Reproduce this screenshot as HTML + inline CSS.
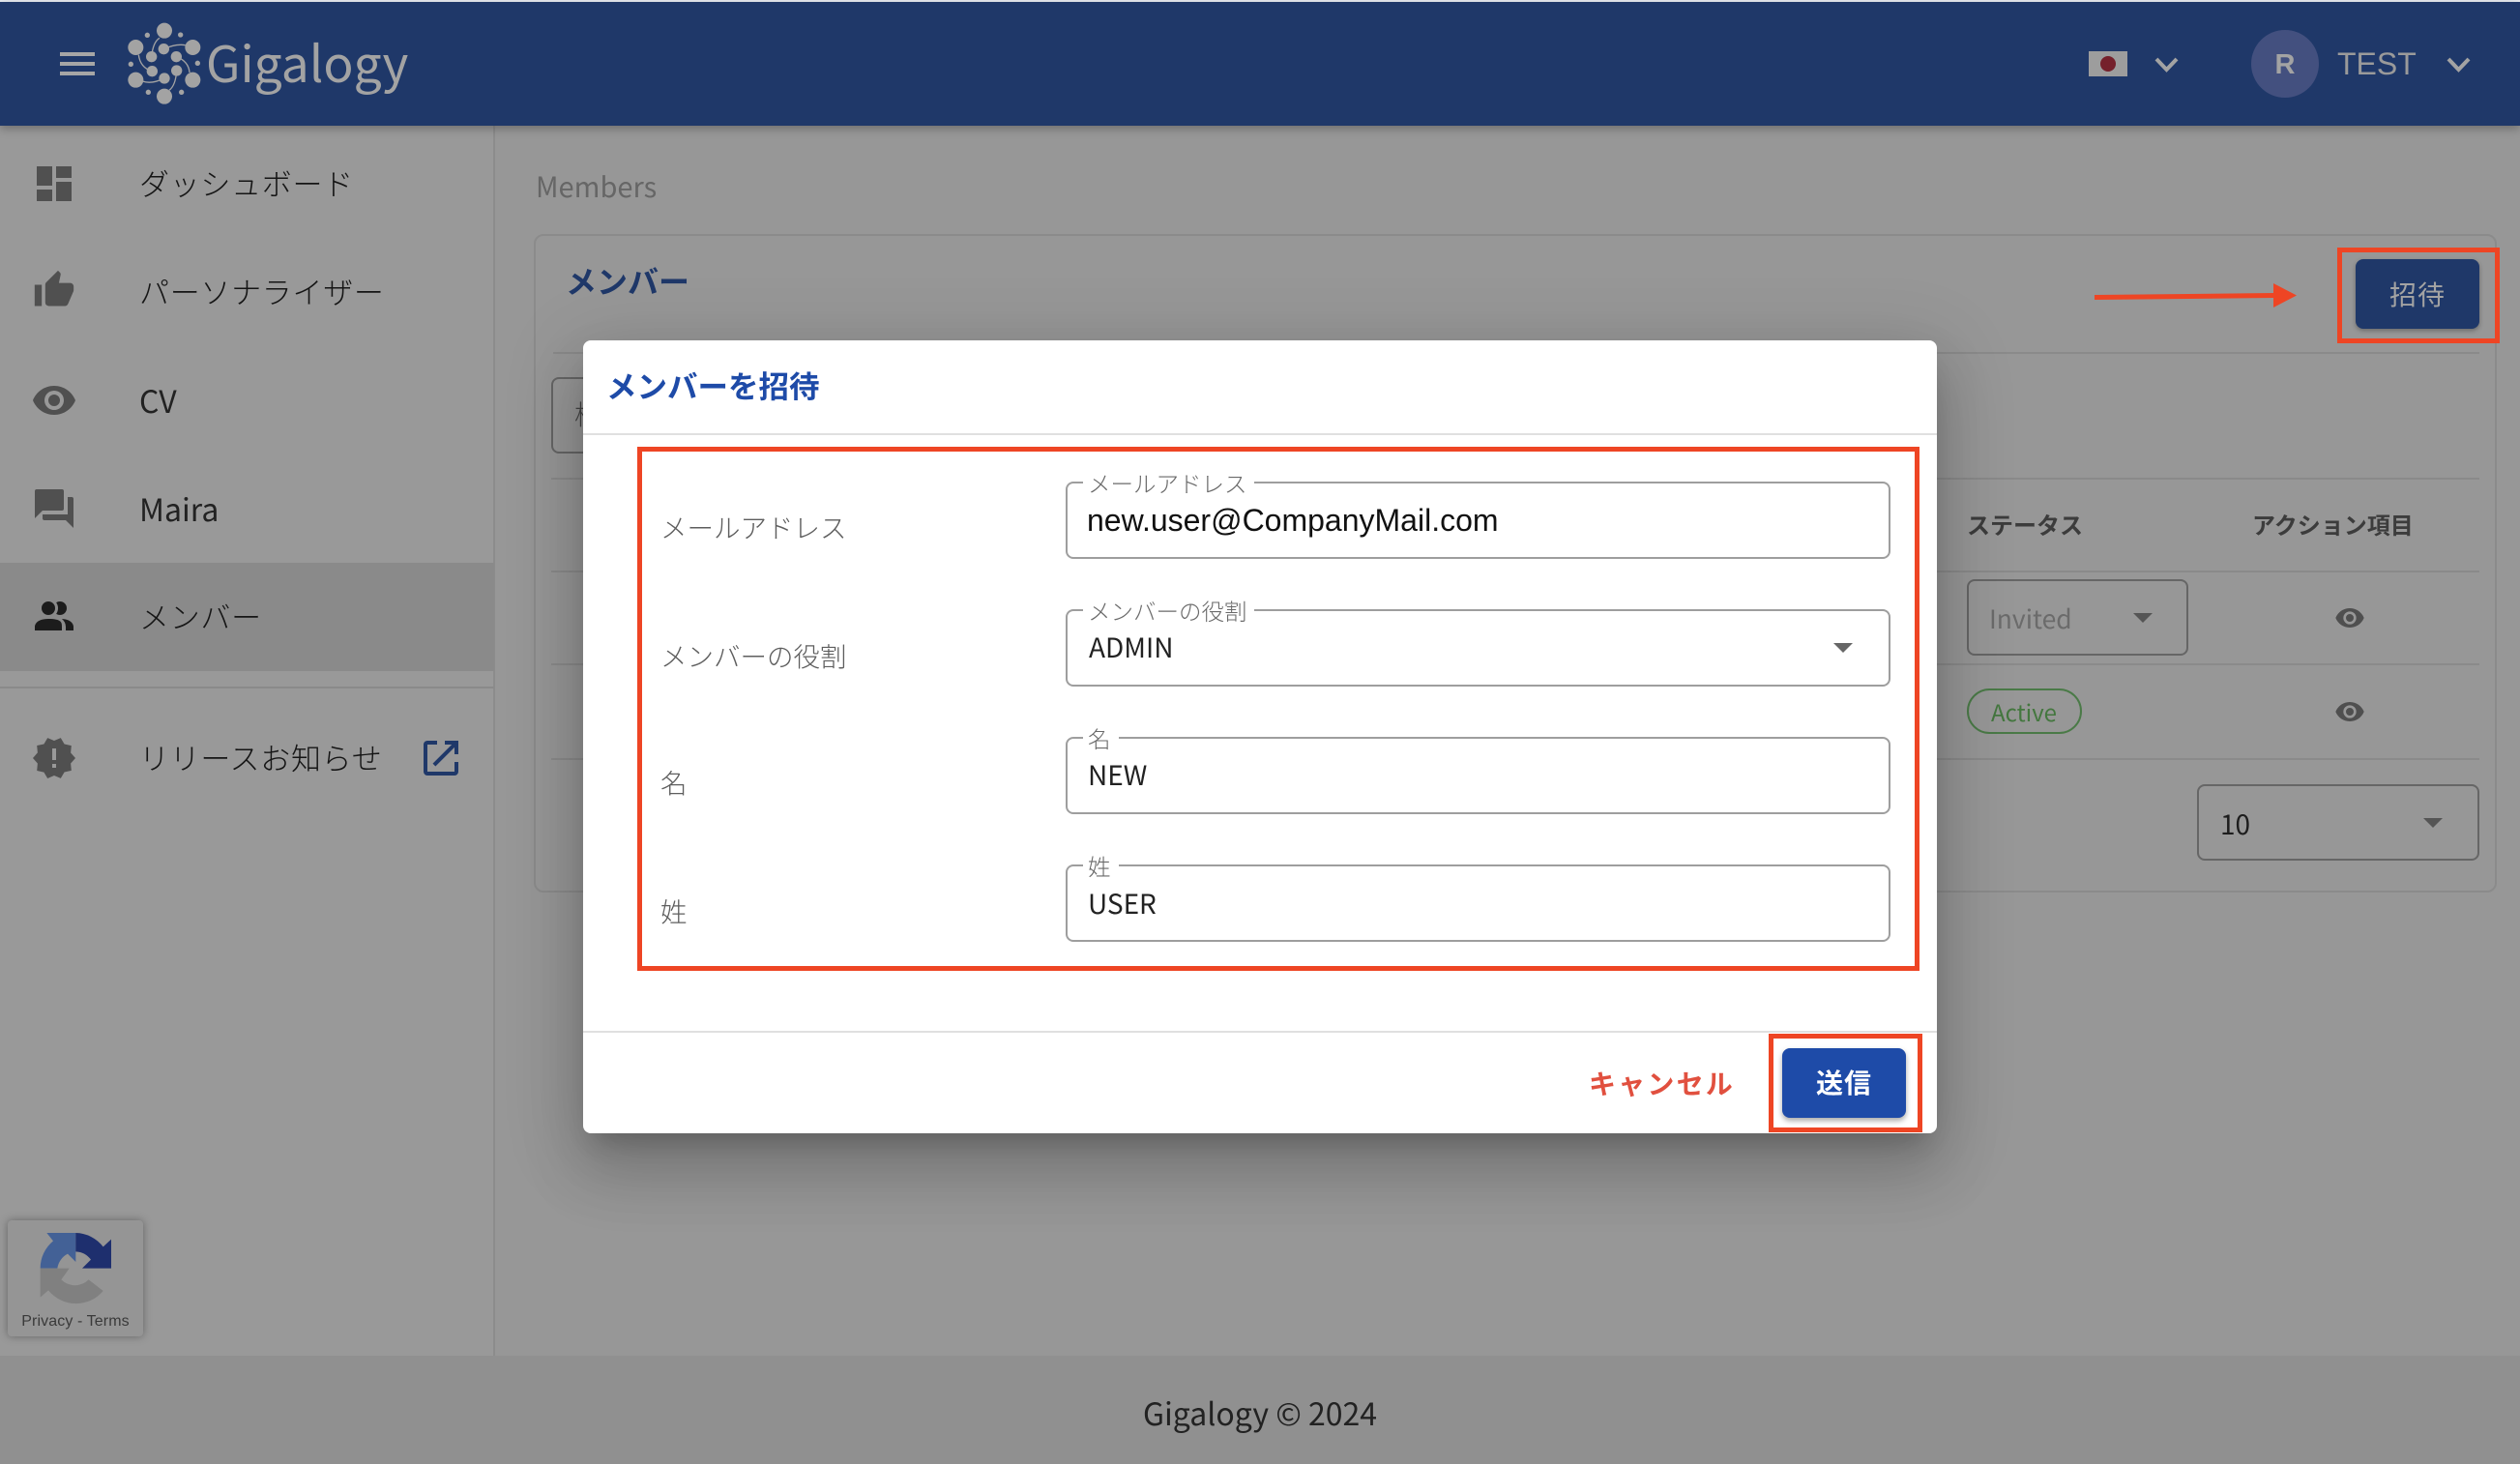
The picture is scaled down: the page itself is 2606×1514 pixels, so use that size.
<!DOCTYPE html>
<html lang="ja">
<head>
<meta charset="utf-8">
<title>Members</title>
<style>
html,body{margin:0;padding:0;width:2606px;height:1514px;overflow:hidden;background:#979797}
body{position:relative;font-family:"Liberation Sans","Noto Sans CJK JP",sans-serif}
.a{position:absolute;box-sizing:border-box}
.t{position:absolute;white-space:nowrap;line-height:44px;height:44px}
.n{font-family:"Noto Sans CJK JP","Liberation Sans",sans-serif}
.nav{font-size:31px;letter-spacing:.7px;color:#151515;font-weight:300;left:144px}
.ln{position:absolute;height:2px;background:#8a8a8a}
.lbl{font-size:27.500px;color:#5e5e5e;font-weight:300;left:683px}
.field{position:absolute;left:1102px;width:853px;height:80px;border:2px solid #9e9e9e;border-radius:8px;box-sizing:border-box}
.notch{position:absolute;height:4px;background:#fff}
.leg{font-size:23.500px;color:#6a6a6a;font-weight:300;left:1125px;line-height:30px;height:30px}
.val{font-size:28px;color:#222;left:1125px;font-weight:400}
svg{position:absolute;overflow:visible}
.red{position:absolute;box-sizing:border-box;border:5px solid #ee4524}
</style>
</head>
<body>
<!-- top strip + header -->
<div class="a" style="left:0;top:0;width:2606px;height:2px;background:#e9edf3"></div>
<div class="a" style="left:0;top:2px;width:2606px;height:128px;background:#1f3869;box-shadow:0 3px 9px rgba(0,0,0,.28);z-index:3"></div>

<div style="position:absolute;left:0;top:0;z-index:4;width:2606px;height:130px">
  <div class="a" style="left:62px;top:54px;width:36px;height:4px;background:#a6a6a6"></div>
  <div class="a" style="left:62px;top:64px;width:36px;height:4px;background:#a6a6a6"></div>
  <div class="a" style="left:62px;top:74px;width:36px;height:4px;background:#a6a6a6"></div>

  <svg style="left:120px;top:10px" width="100" height="110" viewBox="0 0 300 330">
    <g fill="#a3a3a3">
      <circle cx="150" cy="65" r="24"/><circle cx="61" cy="117" r="24"/><circle cx="238" cy="117" r="24"/>
      <circle cx="61" cy="218" r="24"/><circle cx="238" cy="218" r="24"/><circle cx="150" cy="269" r="24"/>
      <circle cx="148" cy="122" r="17"/><circle cx="110" cy="146" r="17"/><circle cx="187" cy="146" r="17"/>
      <circle cx="112" cy="191" r="17"/><circle cx="188" cy="189" r="17"/><circle cx="150" cy="213" r="17"/>
      <circle cx="97" cy="79" r="8"/><circle cx="200" cy="78" r="8"/><circle cx="46" cy="169" r="8"/>
      <circle cx="253" cy="166" r="8"/><circle cx="100" cy="256" r="8"/><circle cx="203" cy="256" r="8"/>
    </g>
    <g fill="none" stroke="#a3a3a3" stroke-width="4">
      <path d="M110 146Q115 100 135 88"/><path d="M148 122Q185 105 215 110"/><path d="M187 146Q225 160 228 195"/>
      <path d="M188 189Q185 235 165 250"/><path d="M150 213Q110 232 82 222"/><path d="M112 191Q75 180 70 140"/>
    </g>
  </svg>
  <div class="t n" style="left:213px;top:28px;font-size:51.500px;line-height:70px;height:70px;color:#a3a3a3">Gigalogy</div>

  <div class="a" style="left:2160px;top:53px;width:40px;height:26px;background:#9d9d9d"></div>
  <div class="a" style="left:2172px;top:58px;width:16px;height:16px;border-radius:50%;background:#75202b"></div>
  <svg style="left:0;top:0" width="2606" height="130" viewBox="0 0 2606 130">
    <path d="M2230 61L2240.500 72L2251 61" fill="none" stroke="#a3a3a3" stroke-width="4"/>
    <path d="M2532 61L2542.500 72L2553 61" fill="none" stroke="#a3a3a3" stroke-width="4"/>
  </svg>
  <div class="a" style="left:2328px;top:31px;width:70px;height:70px;border-radius:50%;background:#43507f"></div>
  <div class="t" style="left:2328px;width:70px;text-align:center;top:45px;font-size:29px;font-weight:700;color:#a3a3a3">R</div>
  <div class="t" style="left:2417px;top:44px;font-size:32px;color:#9a9a9a">TEST</div>
</div>

<!-- sidebar -->
<div class="a" style="left:0;top:130px;width:511px;height:1272px;background:#999"></div>
<div class="a" style="left:510px;top:130px;width:2px;height:1272px;background:#8c8c8c"></div>
<div class="a" style="left:0;top:582px;width:511px;height:112px;background:#8a8a8a"></div>
<div class="ln" style="left:0;top:710px;width:511px"></div>

<svg style="left:32px;top:166px" width="48" height="48" viewBox="0 0 24 24"><path fill="#505050" d="M13,3V9H21V3M13,21H21V11H13M3,21H11V15H3M3,13H11V3H3V13Z"/></svg>
<svg style="left:34px;top:278px" width="44" height="44" viewBox="0 0 24 24"><path fill="#505050" d="M23,10C23,8.89 22.1,8 21,8H14.68L15.64,3.43C15.66,3.33 15.67,3.22 15.67,3.11C15.67,2.7 15.5,2.32 15.23,2.05L14.17,1L7.59,7.58C7.22,7.95 7,8.45 7,9V19A2,2 0 0,0 9,21H18C18.83,21 19.54,20.5 19.84,19.78L22.86,12.73C22.95,12.5 23,12.26 23,12V10M1,21H5V9H1V21Z"/></svg>
<svg style="left:32px;top:390px" width="48" height="48" viewBox="0 0 24 24"><path fill="#505050" d="M12,9A3,3 0 0,0 9,12A3,3 0 0,0 12,15A3,3 0 0,0 15,12A3,3 0 0,0 12,9M12,17A5,5 0 0,1 7,12A5,5 0 0,1 12,7A5,5 0 0,1 17,12A5,5 0 0,1 12,17M12,4.5C7,4.5 2.73,7.61 1,12C2.73,16.39 7,19.5 12,19.5C17,19.5 21.27,16.39 23,12C21.27,7.61 17,4.5 12,4.5Z"/></svg>
<svg style="left:32px;top:502px" width="48" height="48" viewBox="0 0 24 24"><path fill="#505050" d="M17,12V3A1,1 0 0,0 16,2H3A1,1 0 0,0 2,3V17L6,13H16A1,1 0 0,0 17,12M21,6H19V15H6V17A1,1 0 0,0 7,18H18L22,22V7A1,1 0 0,0 21,6Z"/></svg>
<svg style="left:32px;top:614px" width="48" height="48" viewBox="0 0 24 24"><path fill="#1c1c1c" d="M16 17V19H2V17S2 13 9 13 16 15 16 17M12.5 7.5A3.5 3.5 0 1 0 9 11A3.500 3.500 0 0 0 12.500 7.500M15.94 13A5.32 5.32 0 0 1 18 17V19H22V17S22 13.37 15.94 13M15 4A3.39 3.39 0 0 0 13.07 4.59A5 5 0 0 1 13.07 10.41A3.39 3.39 0 0 0 15 11A3.5 3.5 0 0 0 15 4Z"/></svg>
<svg style="left:32px;top:760px" width="48" height="48" viewBox="0 0 24 24"><path fill="#505050" d="M23,12L20.56,9.22L20.9,5.54L17.29,4.72L15.4,1.54L12,3L8.6,1.54L6.71,4.72L3.1,5.53L3.44,9.21L1,12L3.44,14.78L3.1,18.47L6.71,19.29L8.6,22.47L12,21L15.4,22.46L17.29,19.28L20.9,18.46L20.56,14.78L23,12M13,17H11V15H13V17M13,13H11V7H13V13Z"/></svg>
<svg style="left:432px;top:760px" width="48" height="48" viewBox="0 0 24 24"><path fill="#1f3869" d="M14,3V5H17.59L7.76,14.83L9.17,16.24L19,6.41V10H21V3M19,19H5V5H10V3H5C3.89,3 3,3.9 3,5V19A2,2 0 0,0 5,21H19A2,2 0 0,0 21,19V14H19V19Z"/></svg>

<div class="t nav" style="top:170px">ダッシュボード</div>
<div class="t nav" style="top:282px">パーソナライザー</div>
<div class="t nav n" style="top:392px;font-size:32px;letter-spacing:0;font-weight:400;color:#222">CV</div>
<div class="t nav n" style="top:504px;font-size:32px;letter-spacing:0;font-weight:400;color:#222">Maira</div>
<div class="t nav" style="top:618px">メンバー</div>
<div class="t nav" style="top:764px">リリースお知らせ</div>

<!-- recaptcha -->
<div class="a" style="left:8px;top:1262px;width:140px;height:120px;background:#959595;border-radius:4px;box-shadow:0 0 9px rgba(0,0,0,.35);z-index:2"></div>
<svg style="left:0;top:1240px;z-index:2" width="200" height="170" viewBox="0 0 600 510">
  <path fill="#436196" d="M125 215A110 110 0 0 1 165 130L145 105H235V195L210 170A60 60 0 0 0 178 215Z"/>
  <path fill="#1e2f6e" d="M235 105A110 110 0 0 1 320 148L345 125V215H255L282 188A62 62 0 0 0 235 163Z"/>
  <path fill="#808080" d="M125 305V215H215L190 250A60 60 0 0 0 275 250L320 285A110 110 0 0 1 150 283Z"/>
</svg>
<div class="t" style="left:8px;width:140px;text-align:center;top:1345px;font-size:16px;letter-spacing:.1px;color:#3a3a3a;z-index:2">Privacy - Terms</div>

<!-- footer -->
<div class="a" style="left:0;top:1402px;width:2606px;height:112px;background:#909090"></div>
<div class="t n" style="left:0;width:2606px;text-align:center;top:1439px;font-size:32px;font-weight:400;color:#222">Gigalogy © 2024</div>

<!-- main -->
<div class="t n" style="left:554px;top:170px;font-size:29px;color:#666;font-weight:400">Members</div>
<div class="a" style="left:552px;top:242px;width:2030px;height:681px;border:2px solid #8b8b8b;border-radius:10px"></div>
<div class="t" style="left:585px;top:270px;font-size:32px;font-weight:700;color:#1f3869">メンバー</div>
<div class="ln" style="left:572px;top:364px;width:1992px"></div>
<div class="ln" style="left:570px;top:494px;width:1994px"></div>
<div class="ln" style="left:570px;top:590px;width:1994px"></div>
<div class="ln" style="left:570px;top:686px;width:1994px"></div>
<div class="ln" style="left:570px;top:784px;width:1994px"></div>
<div class="a" style="left:570px;top:390px;width:300px;height:79px;border:2px solid #666;border-radius:8px"></div>
<div class="t" style="left:594px;top:408px;font-size:28px;color:#444;font-weight:300">検索</div>

<div class="t" style="left:2034px;top:523px;font-size:24px;font-weight:700;color:#3c3c3c">ステータス</div>
<div class="t" style="left:2329px;top:523px;font-size:24px;font-weight:700;color:#3c3c3c">アクション項目</div>

<div class="a" style="left:2034px;top:599px;width:229px;height:79px;border:2px solid #666;border-radius:8px"></div>
<div class="t n" style="left:2057px;top:617px;font-size:26.500px;color:#6b6b6b;font-weight:400">Invited</div>
<svg style="left:2206px;top:634px" width="20" height="10" viewBox="0 0 20 10"><path d="M0 0H20L10 10Z" fill="#555"/></svg>
<svg style="left:2413.500px;top:623px" width="32" height="32" viewBox="0 0 24 24"><path fill="#4f4f4f" d="M12,9A3,3 0 0,0 9,12A3,3 0 0,0 12,15A3,3 0 0,0 15,12A3,3 0 0,0 12,9M12,17A5,5 0 0,1 7,12A5,5 0 0,1 12,7A5,5 0 0,1 17,12A5,5 0 0,1 12,17M12,4.5C7,4.5 2.73,7.61 1,12C2.73,16.39 7,19.5 12,19.5C17,19.5 21.27,16.39 23,12C21.27,7.61 17,4.5 12,4.5Z"/></svg>

<div class="a" style="left:2034px;top:712px;width:119px;height:47px;border:2px solid #4a7a47;border-radius:24px"></div>
<div class="t n" style="left:2034px;width:118px;text-align:center;top:714px;font-size:24px;color:#44773f;font-weight:400">Active</div>
<svg style="left:2413.500px;top:720px" width="32" height="32" viewBox="0 0 24 24"><path fill="#4f4f4f" d="M12,9A3,3 0 0,0 9,12A3,3 0 0,0 12,15A3,3 0 0,0 15,12A3,3 0 0,0 12,9M12,17A5,5 0 0,1 7,12A5,5 0 0,1 12,7A5,5 0 0,1 17,12A5,5 0 0,1 12,17M12,4.5C7,4.5 2.73,7.61 1,12C2.73,16.39 7,19.5 12,19.500C17,19.5 21.27,16.39 23,12C21.27,7.61 17,4.5 12,4.5Z"/></svg>

<div class="a" style="left:2272px;top:811px;width:292px;height:79px;border:2px solid #666;border-radius:8px"></div>
<div class="t n" style="left:2296px;top:830px;font-size:28px;color:#1d1d1d;font-weight:400">10</div>
<svg style="left:2506px;top:846px" width="20" height="10" viewBox="0 0 20 10"><path d="M0 0H20L10 10Z" fill="#555"/></svg>

<!-- invite button + annotation -->
<div class="a" style="left:2436px;top:268px;width:128px;height:72px;background:#1f3869;border-radius:8px;box-shadow:0 2px 5px rgba(0,0,0,.3)"></div>
<div class="t" style="left:2436px;width:128px;text-align:center;top:284px;font-size:28px;letter-spacing:1px;color:#a3a3a3;font-weight:400">招待</div>
<div class="red" style="left:2417px;top:256px;width:168px;height:99px"></div>
<svg style="left:2160px;top:285px" width="220" height="40" viewBox="2160 285 220 40">
  <path d="M2166 307.500L2352 305.500" stroke="#ee4524" stroke-width="5" fill="none"/>
  <path d="M2351 293L2375 305.500L2351 318Z" fill="#ee4524"/>
</svg>

<!-- dialog -->
<div class="a" style="left:603px;top:352px;width:1400px;height:820px;background:#fff;border-radius:8px;box-shadow:0 18px 25px -12px rgba(0,0,0,.2),0 40px 63px 5px rgba(0,0,0,.14),0 15px 76px 13px rgba(0,0,0,.12);z-index:5"></div>
<div style="position:absolute;left:0;top:0;width:2606px;height:1514px;z-index:6">
  <div class="t" style="left:627px;top:378px;font-size:31.500px;font-weight:700;color:#1e4ba8">メンバーを招待</div>
  <div class="a" style="left:603px;top:448px;width:1400px;height:2px;background:#e0e0e0"></div>
  <div class="a" style="left:603px;top:1066px;width:1400px;height:2px;background:#e0e0e0"></div>

  <div class="red" style="left:659px;top:462px;width:1326px;height:542px"></div>

  <div class="t lbl" style="top:525px">メールアドレス</div>
  <div class="t lbl" style="top:658px">メンバーの役割</div>
  <div class="t lbl" style="top:789px">名</div>
  <div class="t lbl" style="top:922px">姓</div>

  <div class="field" style="top:498px"></div>
  <div class="notch" style="left:1120px;top:497px;width:177px"></div>
  <div class="t leg" style="top:486px">メールアドレス</div>
  <div class="t" style="left:1124px;top:516px;font-size:32px;color:#111">new.user@CompanyMail.com</div>

  <div class="field" style="top:630px"></div>
  <div class="notch" style="left:1120px;top:629px;width:177px"></div>
  <div class="t leg" style="top:618px">メンバーの役割</div>
  <div class="t val n" style="top:647px;left:1126px">ADMIN</div>
  <svg style="left:1896px;top:665px" width="20" height="10" viewBox="0 0 20 10"><path d="M0 0H20L10 10Z" fill="#666"/></svg>

  <div class="field" style="top:762px"></div>
  <div class="notch" style="left:1120px;top:761px;width:37px"></div>
  <div class="t leg" style="top:750px">名</div>
  <div class="t val n" style="top:779px">NEW</div>

  <div class="field" style="top:894px"></div>
  <div class="notch" style="left:1120px;top:893px;width:37px"></div>
  <div class="t leg" style="top:882px">姓</div>
  <div class="t val n" style="top:912px">USER</div>

  <div class="t" style="left:1643px;top:1100px;font-size:28px;letter-spacing:2.200px;font-weight:700;color:#e1503f">キャンセル</div>
  <div class="a" style="left:1843px;top:1084px;width:128px;height:72px;background:#1e4ba8;border-radius:8px;box-shadow:0 3px 6px rgba(0,0,0,.35)"></div>
  <div class="t" style="left:1843px;width:128px;text-align:center;top:1099px;font-size:28px;letter-spacing:1px;font-weight:700;color:#fff">送信</div>
  <div class="red" style="left:1829px;top:1069px;width:159px;height:102px"></div>
</div>
</body>
</html>
